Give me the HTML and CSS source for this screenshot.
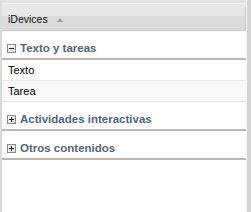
FILE: index.html
```html
<!DOCTYPE html>
<html>
<head>
<meta charset="utf-8">
<link rel="stylesheet" href="styles.css">
</head>
<body>
<div class="panel">
  <div class="main">
    <div class="topbar"></div>
    <div class="colhead"><span class="coltitle">iDevices</span><span class="sort"></span></div>
    <div class="tree">
      <div class="ghead">
        <svg class="tog" width="9" height="9" viewBox="0 0 9 9"><defs><linearGradient id="g1" x1="0" y1="0" x2="1" y2="1"><stop offset="0" stop-color="#ffffff"/><stop offset="1" stop-color="#d4d4d4"/></linearGradient></defs><rect x="0.5" y="0.5" width="8" height="8" fill="url(#g1)" stroke="#8a8a8a"/><rect x="2" y="4" width="5" height="1" fill="#222"/></svg>
        <span>Texto y tareas</span>
      </div>
      <div class="item">Texto</div>
      <div class="item alt">Tarea</div>
      <div class="ghead">
        <svg class="tog" width="9" height="9" viewBox="0 0 9 9"><defs><linearGradient id="g2" x1="0" y1="0" x2="1" y2="1"><stop offset="0" stop-color="#ffffff"/><stop offset="1" stop-color="#d4d4d4"/></linearGradient></defs><rect x="0.5" y="0.5" width="8" height="8" fill="url(#g2)" stroke="#8a8a8a"/><rect x="2" y="4" width="5" height="1" fill="#222"/><rect x="4" y="2" width="1" height="5" fill="#222"/></svg>
        <span>Actividades interactivas</span>
      </div>
      <div class="ghead">
        <svg class="tog" width="9" height="9" viewBox="0 0 9 9"><defs><linearGradient id="g3" x1="0" y1="0" x2="1" y2="1"><stop offset="0" stop-color="#ffffff"/><stop offset="1" stop-color="#d4d4d4"/></linearGradient></defs><rect x="0.5" y="0.5" width="8" height="8" fill="url(#g3)" stroke="#8a8a8a"/><rect x="2" y="4" width="5" height="1" fill="#222"/><rect x="4" y="2" width="1" height="5" fill="#222"/></svg>
        <span>Otros contenidos</span>
      </div>
    </div>
  </div>
  <div class="scroll"></div>
</div>
</body>
</html>
```
FILE: styles.css
```css
html, body {
  margin: 0;
  padding: 0;
  background: #ffffff;
}
body {
  width: 251px;
  height: 212px;
  overflow: hidden;
  font-family: "Liberation Sans", Arial, sans-serif;
}
.panel {
  display: flex;
  height: 212px;
  border-left: 2px solid #dadada;
  box-sizing: border-box;
}
.main {
  flex: 1;
  display: flex;
  flex-direction: column;
  background: #ffffff;
  border-right: 1px solid #f4f4f4;
}
.scroll {
  width: 4px;
  background: #d6d6d6;
}
.topbar {
  height: 7px;
  background: linear-gradient(to bottom, #e2e2e2 0, #e2e2e2 3px, #f4f4f4 3px, #f4f4f4 4px, #e9e9e9 4px, #e9e9e9 7px);
}
.colhead {
  height: 23px;
  display: flex;
  align-items: center;
  padding-left: 6px;
  border-bottom: 1px solid #cacaca;
  border-right: 1px solid #c6c6c6;
  background: linear-gradient(to bottom, #e7e7e7 0, #e7e7e7 9px, #dbdbdb 9px, #dbdbdb 100%);
}
.coltitle {
  font-size: 10.5px;
  color: #111111;
}
.sort {
  margin-left: 9px;
  margin-top: 2px;
  width: 0;
  height: 0;
  border-left: 3.5px solid transparent;
  border-right: 3.5px solid transparent;
  border-bottom: 4px solid #9c9c9c;
}
.tree {
  display: flex;
  flex-direction: column;
}
.ghead {
  display: flex;
  align-items: center;
  padding: 10px 0 3px 5px;
  line-height: 14px;
  height: 14px;
  font-size: 11.5px;
  font-weight: bold;
  color: #56647a;
  border-bottom: 2px solid #c1b6b6;
}
.tog {
  margin-right: 4px;
  flex: none;
}
.item {
  height: 20px;
  line-height: 20px;
  padding-left: 6px;
  font-size: 11px;
  color: #000000;
  border-bottom: 1px solid #ececec;
}
.item.alt {
  background: #f9f9f9;
  border-bottom-color: #e2e2e2;
}
```
